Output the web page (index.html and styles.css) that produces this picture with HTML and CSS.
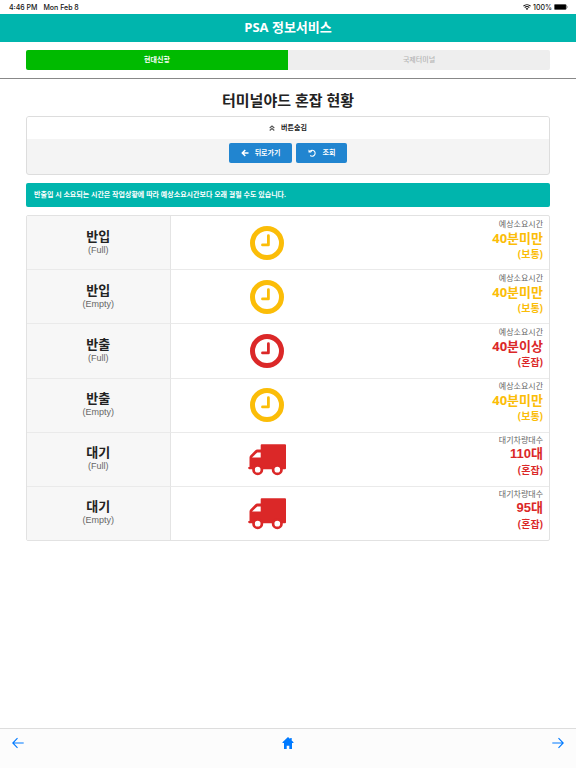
FILE: index.html
```html
<!DOCTYPE html>
<html lang="ko">
  <head>
    <meta charset="utf-8">
    <meta name="viewport" content="width=device-width, initial-scale=1">
    <title>PSA 정보서비스</title>
    <link rel="stylesheet" href="styles.css">
  </head>
  <body>
    <svg class="symbols" aria-hidden="true">
      <symbol id="clock" viewBox="0 0 34 34">
        <circle cx="17" cy="17" r="14.500" fill="none" stroke="currentColor" stroke-width="5"/>
        <path d="M18.400 9.700v9.200h-5.900" fill="none" stroke="currentColor" stroke-width="2.800" stroke-linejoin="round" stroke-linecap="round"/>
      </symbol>
      <symbol id="truck" viewBox="0 -2 38 34">
        <path fill="currentColor" fill-rule="evenodd" d="M13.700.3H37a1 1 0 0 1 1 1V24.300a1 1 0 0 1-1 1H1.300a1 1 0 0 1-1-1V23H1.500V13.500Q1.500 12.300 2.300 11.500L7.200 6.400Q8 5.600 9.300 5.600H12.700V1.300a1 1 0 0 1 1-1ZM4 13.500H12.700V8.400H9.300Z"/>
        <circle cx="9.700" cy="25.700" r="4.200" fill="#fff" stroke="currentColor" stroke-width="2.700"/>
        <circle cx="29.300" cy="25.700" r="4.200" fill="#fff" stroke="currentColor" stroke-width="2.700"/>
      </symbol>
    </svg>

    <div class="status-bar">
      <span>4:46 PM</span>
      <span>Mon Feb 8</span>
      <span class="status-right">
        <svg width="8" height="6" viewBox="0 0 8 6"><path d="M.4 2.200a5.200 5.200 0 0 1 7.200 0M1.700 3.600a3.300 3.300 0 0 1 4.600 0" fill="none" stroke="#111" stroke-width="1.100"/><path d="M4 6 2.700 4.700a1.800 1.800 0 0 1 2.600 0z" fill="#111"/></svg>
        <span>100%</span>
        <svg width="14" height="6" viewBox="0 0 14 6"><rect x=".3" y=".3" width="12" height="5.400" rx="1.200" fill="#000" stroke="#777" stroke-width=".6"/><path d="M13 2v2q.8-.3.8-1T13 2" fill="#888"/></svg>
      </span>
    </div>

    <header class="header">PSA 정보서비스</header>

    <nav class="tabs">
      <button class="tab active" type="button">현대신항</button>
      <button class="tab" type="button">국제터미널</button>
    </nav>

    <main class="content">
      <h1>터미널야드 혼잡 현황</h1>

      <section class="panel">
        <button class="panel-toggle" type="button">
          <svg width="6" height="6" viewBox="0 0 6 6"><path d="M.7 3 3 1 5.300 3M.7 5.500 3 3.500l2.300 2" fill="none" stroke="#555" stroke-width="1.100"/></svg>
          버튼숨김
        </button>
        <div class="panel-body">
          <button class="btn" type="button">
            <svg width="8" height="8" viewBox="0 0 8 8"><path d="M7.500 4H1.500M4.300 1 1.300 4l3 3" fill="none" stroke="#fff" stroke-width="1.500"/></svg>
            뒤로가기
          </button>
          <button class="btn" type="button">
            <svg width="8" height="8" viewBox="0 0 8 8"><path d="M1.300 2.300H4M1.800 2.300A3 3 0 1 1 2.200 6.500" fill="none" stroke="#fff" stroke-width="1.100"/><path d="M.5.6V3.500H3.400z" fill="#fff"/></svg>
            조회
          </button>
        </div>
      </section>

      <p class="message">반출입 시 소요되는 시간은 작업상황에 따라 예상소요시간보다 오래 걸릴 수도 있습니다.</p>

      <table class="yard">
        <tbody>
          <tr>
            <th scope="row">반입<small>(Full)</small></th>
            <td class="icon normal"><svg width="34" height="34"><use href="#clock"/></svg></td>
            <td class="info normal"><span>예상소요시간</span><strong>40분미만</strong><b>(보통)</b></td>
          </tr>
          <tr>
            <th scope="row">반입<small>(Empty)</small></th>
            <td class="icon normal"><svg width="34" height="34"><use href="#clock"/></svg></td>
            <td class="info normal"><span>예상소요시간</span><strong>40분미만</strong><b>(보통)</b></td>
          </tr>
          <tr>
            <th scope="row">반출<small>(Full)</small></th>
            <td class="icon busy"><svg width="34" height="34"><use href="#clock"/></svg></td>
            <td class="info busy"><span>예상소요시간</span><strong>40분이상</strong><b>(혼잡)</b></td>
          </tr>
          <tr>
            <th scope="row">반출<small>(Empty)</small></th>
            <td class="icon normal"><svg width="34" height="34"><use href="#clock"/></svg></td>
            <td class="info normal"><span>예상소요시간</span><strong>40분미만</strong><b>(보통)</b></td>
          </tr>
          <tr>
            <th scope="row">대기<small>(Full)</small></th>
            <td class="icon busy"><svg width="38" height="34"><use href="#truck"/></svg></td>
            <td class="info count busy"><span>대기차량대수</span><strong>110대</strong><b>(혼잡)</b></td>
          </tr>
          <tr>
            <th scope="row">대기<small>(Empty)</small></th>
            <td class="icon busy"><svg width="38" height="34"><use href="#truck"/></svg></td>
            <td class="info count busy"><span>대기차량대수</span><strong>95대</strong><b>(혼잡)</b></td>
          </tr>
        </tbody>
      </table>
    </main>

    <nav class="toolbar">
      <a href="#back" aria-label="뒤로"><svg width="12" height="12" viewBox="0 0 12 12"><path d="M11.700 6H1M5.500 1.200.8 6l4.700 4.800" fill="none" stroke="currentColor" stroke-width="1.100"/></svg></a>
      <a href="#home" aria-label="홈"><svg width="12" height="12" viewBox="0 0 12 12"><path d="M6 0 .5 5.300V6H2v6h2.700V8.700h2.600V12H10V6h1.500V5.300L9.700 3.600V1H8.200V2.100z" fill="currentColor"/></svg></a>
      <a href="#forward" aria-label="앞으로"><svg width="12" height="12" viewBox="0 0 12 12"><path d="M.3 6H11M6.500 1.200 11.200 6l-4.700 4.800" fill="none" stroke="currentColor" stroke-width="1.100"/></svg></a>
    </nav>
  </body>
</html>
```

FILE: styles.css
```css
* {
  box-sizing: border-box;
}

body {
  display: flex;
  flex-direction: column;
  min-height: 100vh;
  margin: 0;
  background: #fff;
  color: #222;
  font-family: "Open Sans", "Noto Sans CJK KR", sans-serif;
  font-size: 7px;
}

button {
  border: 0;
  padding: 0;
  font-family: inherit;
  font-size: 7px;
  line-height: 12px;
  font-weight: bold;
  cursor: pointer;
}

svg {
  display: block;
}

.symbols {
  position: absolute;
  width: 0;
  height: 0;
}

.status-bar {
  display: flex;
  align-items: center;
  gap: 6px;
  height: 14px;
  padding: 0 8px 0 9px;
  font-family: Inter, sans-serif;
  font-size: 7px;
  font-weight: 500;
  color: #111;
}

.status-right {
  display: flex;
  align-items: center;
  gap: 2px;
  margin-left: auto;
}

.header {
  padding-bottom: 2px;
  background: #00b5ad;
  color: #fff;
  font-size: 13px;
  line-height: 26px;
  font-weight: bold;
  text-align: center;
}

.tabs {
  display: flex;
  padding: 8px 26px;
  border-bottom: 1px solid #888;
}

.tab {
  flex: 1;
  height: 20px;
  background: #eee;
  color: #b4b4b4;
  font-weight: 500;
  border-radius: 0 2px 2px 0;
}

.tab.active {
  background: #00ba00;
  color: #fff;
  font-weight: bold;
  border-radius: 2px 0 0 2px;
}

.content {
  flex: 1;
  padding: 9px 26px;
}

h1 {
  margin: 0 0 4px;
  font-size: 15px;
  line-height: 24px;
  font-weight: bold;
  text-align: center;
}

.panel {
  margin-bottom: 8px;
  border: 1px solid #ddd;
  border-radius: 3px;
  background: #f4f4f4;
  overflow: hidden;
}

.panel-toggle {
  display: flex;
  align-items: center;
  justify-content: center;
  gap: 6px;
  width: 100%;
  height: 22px;
  background: #fff;
  color: #222;
}

.panel-body {
  display: flex;
  justify-content: center;
  gap: 4px;
  padding: 4px 0 11px;
}

.btn {
  display: flex;
  align-items: center;
  gap: 6px;
  height: 20px;
  padding: 0 12px;
  border-radius: 2px;
  background: #2185d0;
  color: #fff;
}

.message {
  margin: 0 0 8px;
  padding: 6px 8px;
  border-radius: 2px;
  background: #00b5ad;
  color: #fff;
  line-height: 12px;
  font-weight: bold;
}

.yard {
  width: 100%;
  height: 326px;
  table-layout: fixed;
  border: 1px solid #e2e2e2;
  border-radius: 2px;
  border-spacing: 0;
}

.yard th,
.yard td {
  padding: 0;
  border-bottom: 1px solid #eaeaea;
}

.yard tr:last-child th,
.yard tr:last-child td {
  border-bottom: 0;
}

.yard th {
  width: 27.5%;
  padding-bottom: 2px;
  border-right: 1px solid #e4e4e4;
  background: #f7f7f7;
  font-size: 13px;
  line-height: 16px;
  font-weight: bold;
}

.yard small {
  display: block;
  color: #666;
  font-family: "Liberation Sans", sans-serif;
  font-size: 9px;
  line-height: 12px;
  font-weight: normal;
}

.icon {
  width: 37%;
}

.icon svg {
  margin: 0 auto;
}

.normal {
  color: #fbbd08;
}

.busy {
  color: #db2828;
}

.yard .info {
  padding: 0 6px 6px 0;
  text-align: right;
}

.info span,
.info strong,
.info b {
  display: block;
}

.info span {
  color: #666;
  font-size: 8px;
  line-height: 12px;
}

.info strong {
  font-size: 13px;
  line-height: 16px;
}

.info.count strong {
  font-family: "Liberation Sans", "Noto Sans CJK KR", sans-serif;
}

.info b {
  font-size: 10px;
  line-height: 16px;
}

.toolbar {
  display: flex;
  justify-content: space-between;
  height: 40px;
  padding: 8px 12px;
  border-top: 1px solid #ddd;
  background: #fcfcfc;
}

.toolbar a {
  color: #007aff;
}
```
